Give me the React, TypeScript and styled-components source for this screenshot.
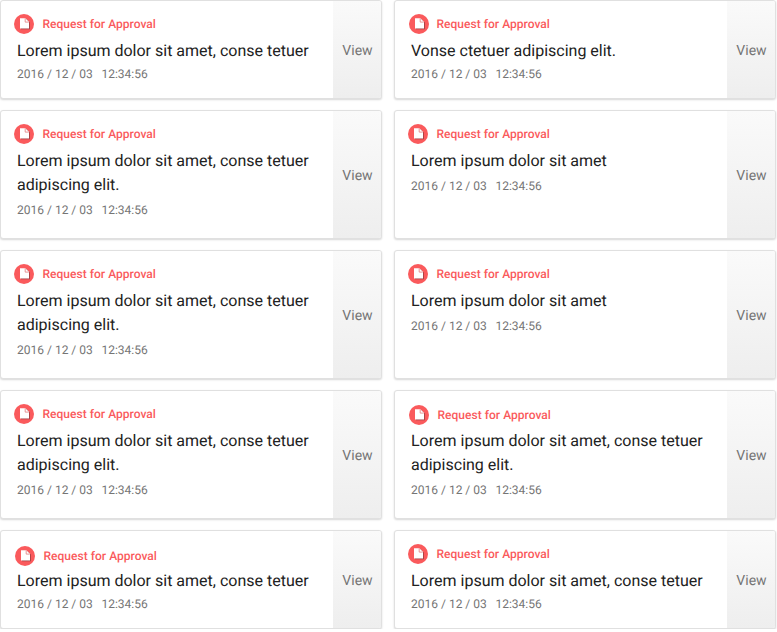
import React from "react";
import styled, { createGlobalStyle } from "styled-components";

const GlobalStyle = createGlobalStyle`
  *, *::before, *::after { box-sizing: border-box; }
  body {
    margin: 0;
    background: #fff;
    font-family: Roboto, "Liberation Sans", sans-serif;
    text-rendering: geometricPrecision;
    -webkit-font-smoothing: antialiased;
  }
`;

const Board = styled.main`
  width: 776px;
  display: grid;
  grid-template-columns: 382px 382px;
  grid-auto-rows: auto;
  column-gap: 12px;
  row-gap: 11px;
`;

const Card = styled.article<{ $tall: boolean }>`
  display: flex;
  height: ${(p) => (p.$tall ? 129 : 99)}px;
  border: 1px solid #e0e0e0;
  border-radius: 3px;
  background: #fff;
  box-shadow: 0 1px 2px rgba(0, 0, 0, 0.16);
  overflow: hidden;
`;

const Content = styled.div`
  flex: 1;
  padding: 13px 12px 0 16px;
`;

const Heading = styled.header<{ $x: number; $y: number }>`
  display: flex;
  align-items: center;
  height: 20px;
  margin: ${(p) => p.$y}px 0 ${(p) => -p.$y}px ${(p) => p.$x - 3}px;
`;

const Badge = styled.svg<{ $shift: number }>`
  flex: none;
  width: 20px;
  height: 20px;
  margin-left: ${(p) => p.$shift}px;
  margin-right: ${(p) => 8.5 - p.$shift}px;
`;

const Kind = styled.span`
  color: #fa5a5c;
  font-size: 12px;
  font-weight: 500;
  line-height: 20px;
  letter-spacing: 0.03px;
  white-space: nowrap;
`;

const Message = styled.p`
  margin: 5px 0 0;
  color: #212121;
  font-size: 16px;
  line-height: 24px;
  white-space: pre;
`;

const Stamp = styled.div<{ $tall: boolean }>`
  display: flex;
  gap: 8.7px;
  margin-top: ${(p) => (p.$tall ? 3 : 1)}px;
  color: #757575;
  font-size: 12px;
  line-height: 20px;
`;

const ViewButton = styled.button`
  flex: none;
  width: 48px;
  padding: 2px 0 0 1px;
  border: 0;
  background: linear-gradient(#fafafa, #eeeeee);
  color: #757575;
  font: 400 14px/20px Roboto, "Liberation Sans", sans-serif;
  text-rendering: inherit;
`;

type Item = {
  message: string;
  tall: boolean;
  x?: number;
  y?: number;
  iconX?: number;
};

const LINE = "Lorem ipsum dolor sit amet, conse tetuer";
const TWO_LINES = LINE + "\nadipiscing elit.";
const SHORT = "Lorem ipsum dolor sit amet";

const items: Item[] = [
  { message: LINE, tall: false },
  { message: "Vonse ctetuer adipiscing elit.", tall: false, iconX: 1 },
  { message: TWO_LINES, tall: true },
  { message: SHORT, tall: true },
  { message: TWO_LINES, tall: true },
  { message: SHORT, tall: true },
  { message: TWO_LINES, tall: true },
  { message: TWO_LINES, tall: true, x: 1, y: 1 },
  { message: LINE, tall: false, x: 1, y: 2 },
  { message: LINE, tall: false },
];

function DocumentBadge({ shift }: { shift: number }) {
  return (
    <Badge $shift={shift} viewBox="0 0 20 20" aria-hidden="true">
      <circle cx="10" cy="10" r="10" fill="#fa5a5c" />
      <path d="M7 5h5.2l3.6 3.4v6.9H7z" fill="#6d3034" opacity=".7" />
      <path d="M6 4.2h5.4L15 7.8v6.8H6z" fill="#fff" />
      <path d="M11.2 4.4v3.7h3.6" fill="none" stroke="#e27c7c" strokeWidth=".8" />
    </Badge>
  );
}

export default function App() {
  return (
    <>
      <GlobalStyle />
      <Board>
        {items.map((item, i) => (
          <Card key={i} $tall={item.tall}>
            <Content>
              <Heading $x={item.x ?? 0} $y={item.y ?? 0}>
                <DocumentBadge shift={item.iconX ?? 0} />
                <Kind>Request for Approval</Kind>
              </Heading>
              <Message>{item.message}</Message>
              <Stamp $tall={item.tall}>
                <span>2016 / 12 / 03</span>
                <span>12:34:56</span>
              </Stamp>
            </Content>
            <ViewButton type="button">View</ViewButton>
          </Card>
        ))}
      </Board>
    </>
  );
}
